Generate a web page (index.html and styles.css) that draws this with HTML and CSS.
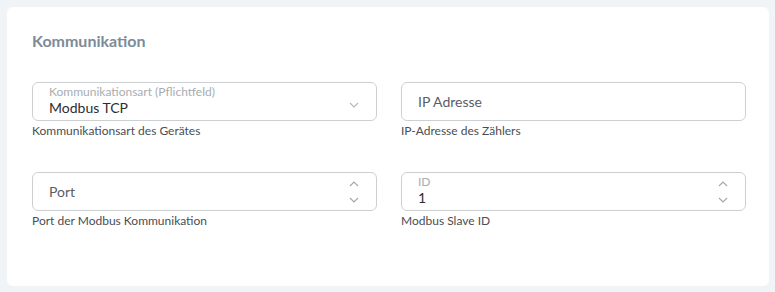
FILE: index.html
```html
<!DOCTYPE html>
<html lang="de">
<head>
    <meta charset="UTF-8">
    <meta name="viewport" content="width=device-width, initial-scale=1.0">
    <title>Kommunikation</title>
    <link rel="stylesheet" href="styles.css">
</head>
<body>

<div class="card">
    <h3 class="card-title">Kommunikation</h3>

    <div class="form-grid">
        <!-- Kommunikationsart -->
        <div class="form-item">
            <div class="field">
                <div class="field-body floating">
                    <span class="field-label">Kommunikationsart (Pflichtfeld)</span>
                    <span class="field-value">Modbus TCP</span>
                </div>
                <div class="field-icon">
                    <svg width="10" height="6" viewBox="0 0 10 6"><path d="M1 1l4 4 4-4" fill="none" stroke="#b4b8bc" stroke-width="1.2"/></svg>
                </div>
            </div>
            <div class="field-hint">Kommunikationsart des Gerätes</div>
        </div>

        <!-- IP Adresse -->
        <div class="form-item">
            <div class="field">
                <div class="field-body">
                    <span class="field-placeholder">IP Adresse</span>
                </div>
            </div>
            <div class="field-hint">IP-Adresse des Zählers</div>
        </div>

        <!-- Port -->
        <div class="form-item">
            <div class="field">
                <div class="field-body">
                    <span class="field-placeholder">Port</span>
                </div>
                <div class="field-spin">
                    <svg width="10" height="6" viewBox="0 0 10 6"><path d="M1 5l4-4 4 4" fill="none" stroke="#a4a8ac" stroke-width="1.2"/></svg>
                    <svg width="10" height="6" viewBox="0 0 10 6"><path d="M1 1l4 4 4-4" fill="none" stroke="#a4a8ac" stroke-width="1.2"/></svg>
                </div>
            </div>
            <div class="field-hint">Port der Modbus Kommunikation</div>
        </div>

        <!-- Slave ID -->
        <div class="form-item">
            <div class="field">
                <div class="field-body floating">
                    <span class="field-label">ID</span>
                    <span class="field-value">1</span>
                </div>
                <div class="field-spin">
                    <svg width="10" height="6" viewBox="0 0 10 6"><path d="M1 5l4-4 4 4" fill="none" stroke="#a4a8ac" stroke-width="1.2"/></svg>
                    <svg width="10" height="6" viewBox="0 0 10 6"><path d="M1 1l4 4 4-4" fill="none" stroke="#a4a8ac" stroke-width="1.2"/></svg>
                </div>
            </div>
            <div class="field-hint">Modbus Slave ID</div>
        </div>
    </div>
</div>

</body>
</html>
```

FILE: styles.css
```css
body {
    font-family: Lato, 'Open Sans', sans-serif;
    background-color: #f1f4f7;
    margin: 0;
    padding: 7px 6px 6px 7px;
}

.card {
    background-color: white;
    border-radius: 6px;
    height: 279px;
    box-sizing: border-box;
    padding: 24px 23px 0 25px;
}

.card-title {
    font-size: 16px;
    font-weight: 700;
    line-height: 19px;
    color: #7b8b9b;
    margin: 0 0 32px 0;
}

/* Two column form */
.form-grid {
    display: grid;
    grid-template-columns: 1fr 1fr;
    column-gap: 24px;
    row-gap: 34px;
}

.field {
    display: flex;
    align-items: center;
    height: 39px;
    box-sizing: border-box;
    border: 1px solid #cdd0d3;
    border-radius: 6px;
    padding: 0 16px;
}

.field-body {
    flex: 1;
    display: flex;
    flex-direction: column;
    justify-content: center;
    align-self: stretch;
}

.field-body.floating {
    justify-content: flex-start;
    padding-top: 2px;
}

.field-label {
    font-size: 12px;
    line-height: 14px;
    color: #a9adb1;
}

.field-value {
    font-size: 14px;
    line-height: 17px;
    color: #2a2e33;
}

.field-placeholder {
    font-size: 14px;
    line-height: 17px;
    color: #5a5e63;
}

.field-icon {
    display: flex;
    margin-top: 6px;
    padding-right: 1px;
}

.field-spin {
    display: flex;
    flex-direction: column;
    gap: 10px;
    padding-right: 1px;
}

.field-spin svg {
    display: block;
}

.field-hint {
    font-size: 12px;
    line-height: 15px;
    color: #4a4e53;
    margin-top: 2px;
}
```
